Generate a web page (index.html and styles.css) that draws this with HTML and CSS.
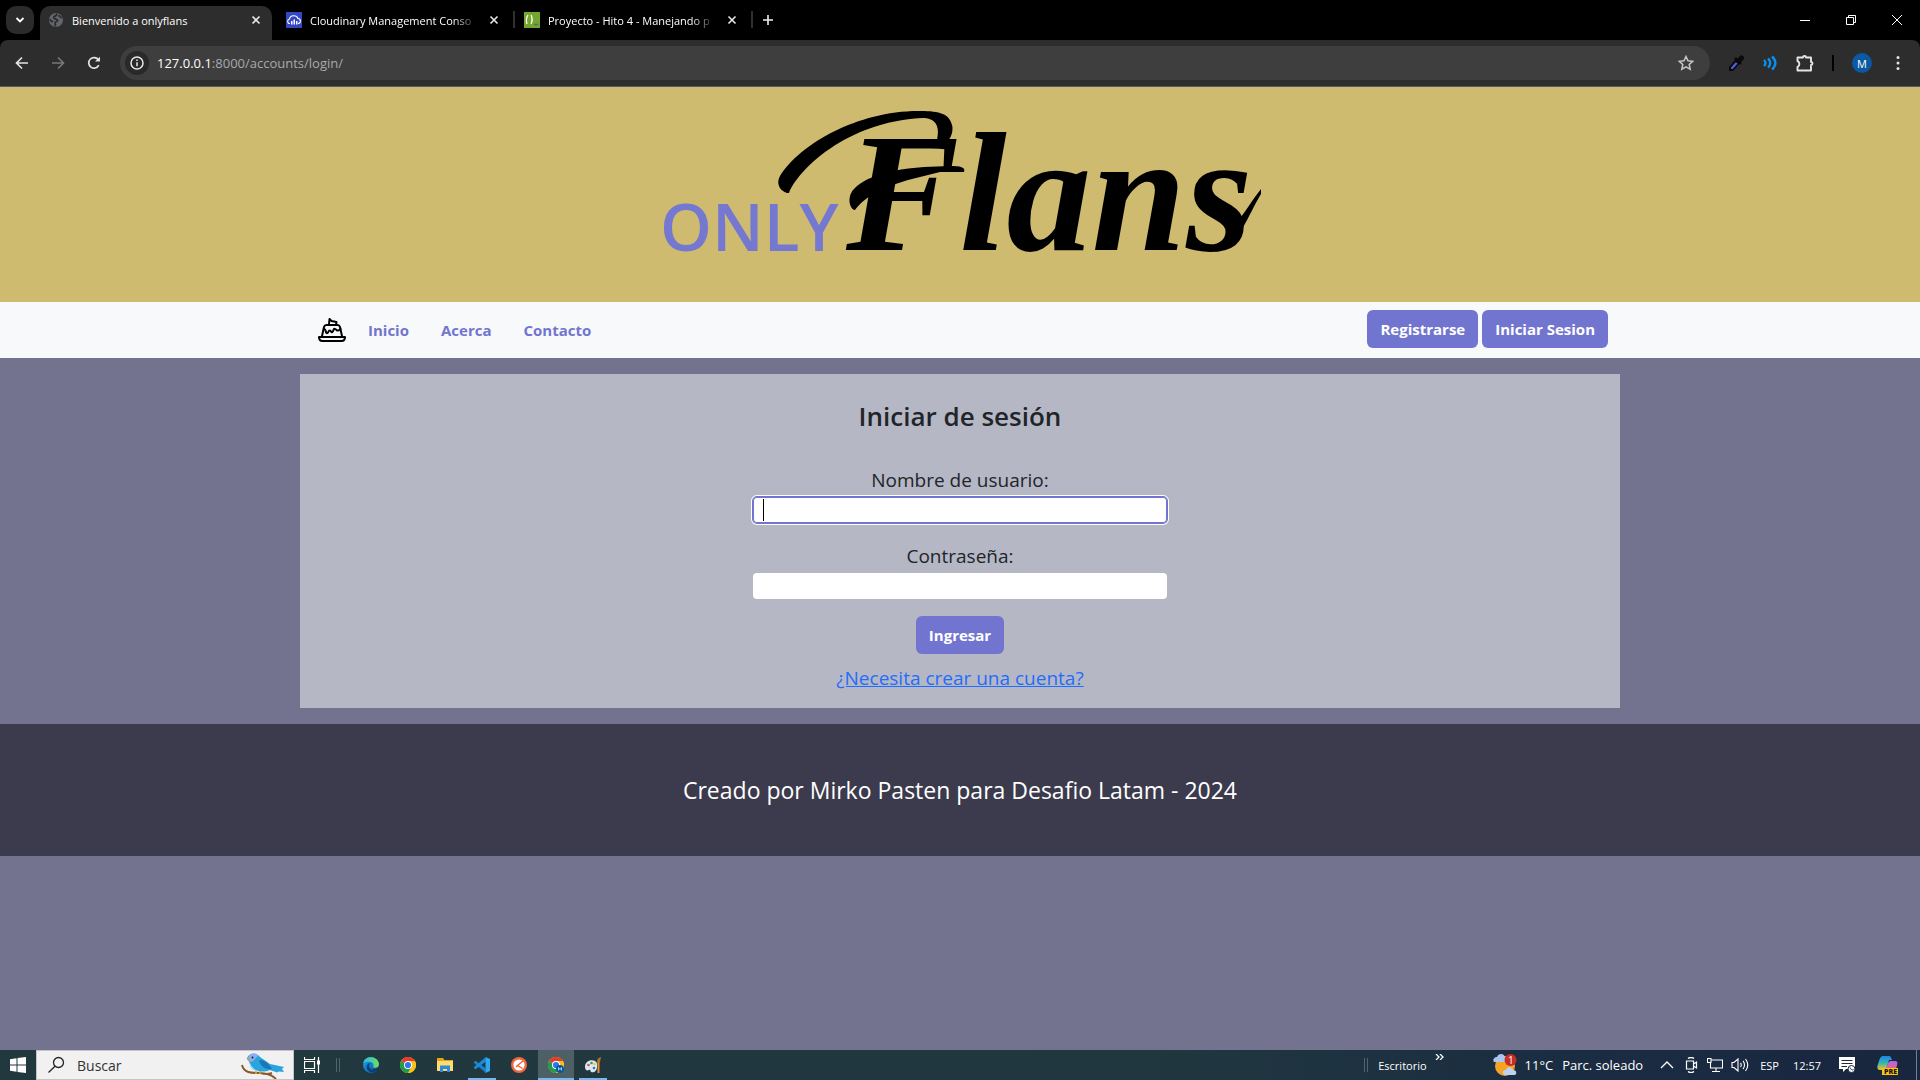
FILE: index.html
```html
<!DOCTYPE html>
<html lang="es">
<head>
<meta charset="utf-8">
<title>Bienvenido a onlyflans</title>
<link rel="stylesheet" href="styles.css">
</head>
<body>
<svg width="0" height="0" class="defs" aria-hidden="true">
  <defs>
    <linearGradient id="edge-a" x1="0" y1="0" x2="1" y2="1"><stop offset="0" stop-color="#1fa5e8"/><stop offset="1" stop-color="#0b50a4"/></linearGradient>
    <linearGradient id="edge-b" x1="0" y1="0" x2="1" y2="0"><stop offset="0" stop-color="#2cb8ea"/><stop offset="1" stop-color="#6fe05a"/></linearGradient>
    <linearGradient id="cop-a" x1="0" y1="0" x2="0" y2="1"><stop offset="0" stop-color="#1d84e8"/><stop offset=".5" stop-color="#35b6b0"/><stop offset="1" stop-color="#f5c026"/></linearGradient>
    <linearGradient id="cop-b" x1="0" y1="0" x2="0" y2="1"><stop offset="0" stop-color="#a66bf0"/><stop offset="1" stop-color="#f0617c"/></linearGradient>
    <symbol id="close" viewBox="0 0 10 10"><path d="M1.500 1.500l7 7M8.500 1.500l-7 7" stroke="#e8e8e8" stroke-width="1.600"/></symbol>
    <symbol id="chrome" viewBox="0 0 16 16">
      <circle cx="8" cy="8" r="8" fill="#fbc116"/>
      <path d="M8 8L1.070 4A8 8 0 0 1 14.930 4z" fill="#e33b2e"/><path d="M1.070 4A8 8 0 0 0 8 16L11.500 10 8 8z" fill="#229b4b"/><path d="M8 4h6.930A8 8 0 0 1 8 16l3.500-6z" fill="#fbc116"/>
      <circle cx="8" cy="8" r="4" fill="#fff"/><circle cx="8" cy="8" r="3.100" fill="#2f77e8"/>
    </symbol>
  </defs>
</svg>

<div class="browser">
  <div class="tabstrip">
    <button class="tab-search" aria-label="Buscar pestañas"><svg width="10" height="8" viewBox="0 0 10 8"><path d="M1.500 2L5 5.500 8.500 2" fill="none" stroke="#fff" stroke-width="1.800"/></svg></button>
    <div class="tab active">
      <svg class="favicon" viewBox="0 0 16 16"><circle cx="8" cy="8" r="7" fill="#62666c"/><path d="M9 1.500c0 2-1 2.500-3 3.200C5 5.500 6.500 7 8.500 7.500c2 .5 1 2-1 2.500-1 .8 0 2 0 4.500M1.500 7.500L5 10M11 3c0 2 2 2 3 3" fill="none" stroke="#2d2d2d" stroke-width="1.800"/></svg>
      <span class="tab-title">Bienvenido a onlyflans</span>
      <button class="tab-close" aria-label="Cerrar"><svg width="10" height="10"><use href="#close"/></svg></button>
    </div>
    <div class="tab">
      <svg class="favicon" viewBox="0 0 16 16"><path fill="#3448c5" d="M0 0h16v16H0z"/><path d="M4 11.500C1 11.500 1 7.500 3.500 7 4 3 10.500 2.500 12 6.500c3.500.5 3 5 0 5" fill="none" stroke="#fff" stroke-width="1.100"/><path d="M5 9h1.500v3.500H5zM7.500 7.500H9v5H7.500zM10 9h1.500v3.500H10z" fill="#fff"/></svg>
      <span class="tab-title">Cloudinary Management Conso</span>
      <button class="tab-close" aria-label="Cerrar"><svg width="10" height="10"><use href="#close"/></svg></button>
    </div>
    <div class="tab next">
      <svg class="favicon" viewBox="0 0 16 16"><path fill="#76a52d" d="M0 0h16v16H0z"/><path d="M4 3C2 6 2 9 3 12M7 3c1.500 3 1.500 6 0 9" fill="none" stroke="#fff" stroke-width="1.300"/><path d="M10 12.500h4" stroke="#3d7a78" stroke-width="1.500"/></svg>
      <span class="tab-title">Proyecto - Hito 4 - Manejando p</span>
      <button class="tab-close" aria-label="Cerrar"><svg width="10" height="10"><use href="#close"/></svg></button>
    </div>
    <button class="new-tab" aria-label="Nueva pestaña"><svg width="12" height="12" viewBox="0 0 12 12"><path d="M6 1v10M1 6h10" stroke="#eee" stroke-width="1.600"/></svg></button>
    <div class="window-buttons">
      <button aria-label="Minimizar"><svg width="12" height="12" viewBox="0 0 12 12"><path d="M1 6.500h10" stroke="#fff"/></svg></button>
      <button aria-label="Restaurar"><svg width="12" height="12" viewBox="0 0 12 12"><path d="M1.500 3.500h7v7h-7zM3.500 3.500v-2h7v7h-2" fill="none" stroke="#fff"/></svg></button>
      <button aria-label="Cerrar ventana"><svg width="12" height="12" viewBox="0 0 12 12"><path d="M1 1l10 10M11 1L1 11" stroke="#fff"/></svg></button>
    </div>
  </div>
  <div class="toolbar">
    <button class="tool" aria-label="Atrás"><svg width="14" height="14" viewBox="0 0 14 14"><path d="M13 7H2M7 1.500L1.500 7 7 12.500" fill="none" stroke="#e3e3e3" stroke-width="1.700"/></svg></button>
    <button class="tool" aria-label="Adelante"><svg width="14" height="14" viewBox="0 0 14 14"><path d="M1 7h11M7 1.500L12.500 7 7 12.500" fill="none" stroke="#777" stroke-width="1.700"/></svg></button>
    <button class="tool" aria-label="Recargar"><svg width="14" height="14" viewBox="0 0 14 14"><path d="M11.800 9.200A5.300 5.300 0 1 1 11.500 4" fill="none" stroke="#e3e3e3" stroke-width="1.700"/><path d="M8 5.500h5V.8z" fill="#e3e3e3"/></svg></button>
    <div class="omnibox">
      <span class="site-info"><svg width="16" height="16" viewBox="0 0 16 16"><circle cx="8" cy="8" r="6" fill="none" stroke="#e8e8e8" stroke-width="1.500"/><path d="M8 7.200v4M8 4.500v1.600" stroke="#e8e8e8" stroke-width="1.500"/></svg></span>
      <span class="url"><b>127.0.0.1</b>:8000/accounts/login/</span>
      <svg width="16" height="16" viewBox="0 0 16 16"><path d="M8 1.500l2 4.300 4.700.5-3.500 3.200 1 4.700L8 11.800l-4.200 2.400 1-4.700L1.300 6.300 6 5.800z" fill="none" stroke="#c7c7c7" stroke-width="1.500"/></svg>
    </div>
    <div class="extensions">
      <svg width="16" height="16" viewBox="0 0 16 16"><path d="M1 16v-4l7-8 4 4-7 8z" fill="#090909"/><path d="M3 14v-1.500l5-5.500 1.700 1.500-5 5.500z" fill="#4f5ce8"/><path d="M7 3l6 6" stroke="#090909" stroke-width="2.500"/><path d="M10.500 6L13.500 3" stroke="#090909" stroke-width="5" stroke-linecap="round"/></svg>
      <svg width="16" height="16" viewBox="0 0 16 16"><path d="M2 5c2 2 2 4 0 6M6 3.500c3 2.500 3 6.500 0 9M10 1.500c4.500 4 4.500 9 0 13" fill="none" stroke="#0b8eee" stroke-width="2.400"/></svg>
      <svg width="18" height="18" viewBox="0 0 18 18"><path d="M1.500 3.500H7a1.500 1.500 0 0 1 3 0h5V8a1.500 1.500 0 0 1 0 3v5.500H1.500V13c2.500-1 2.500-5 0-6z" fill="none" stroke="#e5e5e5" stroke-width="1.900" stroke-linejoin="round"/></svg>
      <span class="divider"></span>
      <span class="avatar">M</span>
      <svg width="16" height="16" viewBox="0 0 16 16" fill="#e3e3e3"><circle cx="8" cy="2.500" r="1.500"/><circle cx="8" cy="8" r="1.500"/><circle cx="8" cy="13.500" r="1.500"/></svg>
    </div>
  </div>
</div>

<main class="page">
  <header class="banner">
    <svg class="logo" viewBox="0 0 640 200" role="img" aria-label="Only Flans">
      <text class="logo-only" x="20" y="161">ONLY</text>
      <text class="logo-flans" x="206" y="160">Flans</text>
      <path d="M149 103C158 80 206 32 282 28C296 28 300 36 297 50L307 52C313 46 313 38 312 35C309 22 296 21 278 21C218 21 160 54 140 86C135 95 142 103 149 103z"/>
      <path d="M215 120C225 106 246 96 272 89L300 82 324 82C326 77 320 76 310 76L284 77C240 80 214 92 210 106C208 114 212 120 215 120z"/>
      <path d="M588 154C602 146 610 122 621 104L621 99C609 114 600 132 588 140z"/>
    </svg>
  </header>
  <nav class="navbar">
    <div class="container nav-row">
      <a class="brand" href="#" aria-label="Onlyflans"><svg width="28" height="24" viewBox="0 0 28 24"><g fill="none" stroke="#000" stroke-width="2" stroke-linejoin="round" stroke-linecap="round"><path d="M1 19h26c0 2.500-1.500 4-3.500 4h-19C2.500 23 1 21.500 1 19z"/><path d="M4 18L6 9c.4-1.400 1.200-2 2.500-2h11c1.300 0 2.100.6 2.500 2l2 9"/><path d="M6 11c1 0 1.500 1 2 3s2 1 2.500-.5 2-1.500 2.500 0 2 .5 2.500-1.500 2-1 3 0 3 0 4-1"/><path d="M11 6l.5-5 2 2 5 1-.5 3"/></g></svg></a>
      <a class="nav-link" href="#">Inicio</a>
      <a class="nav-link" href="#">Acerca</a>
      <a class="nav-link" href="#">Contacto</a>
      <div class="nav-actions">
        <button class="btn">Registrarse</button>
        <button class="btn">Iniciar Sesion</button>
      </div>
    </div>
  </nav>
  <section class="container card">
    <h1>Iniciar de sesión</h1>
    <form class="login">
      <div class="field">
        <label for="user">Nombre de usuario:</label>
        <div class="input-wrap"><input class="focused" id="user" type="text"><span class="caret"></span></div>
      </div>
      <div class="field">
        <label for="pass">Contraseña:</label>
        <input id="pass" type="password">
      </div>
      <button class="btn" type="button">Ingresar</button>
      <a class="signup" href="#">¿Necesita crear una cuenta?</a>
    </form>
  </section>
  <footer class="footer">Creado por Mirko Pasten para Desafio Latam - 2024</footer>
</main>

<div class="taskbar">
  <button class="task" aria-label="Inicio"><svg width="16" height="16" viewBox="0 0 16 16"><path d="M0 2.200L6.500 1.300v6.200H0zM7.500 1.100L16 0v7.500H7.500zM0 8.500h6.500v6.200L0 13.800zM7.500 8.500H16V16l-8.500-1.100z" fill="#fff"/></svg></button>
  <label class="search">
    <svg width="18" height="18" viewBox="0 0 18 18"><circle cx="11.500" cy="6.500" r="5" fill="none" stroke="#222" stroke-width="1.300"/><path d="M8 10.200L1.500 16.500" stroke="#222" stroke-width="1.300"/></svg>
    <input type="text" value="Buscar" aria-label="Buscar">
    <svg width="44" height="28" viewBox="0 0 44 28"><path d="M1 14c2 8 9 8 17 8 7 0 12 1 17 6M19 22c7 2 9 1 12 0" fill="none" stroke="#8a5a2c" stroke-width="2"/><path d="M6 8C7 2 15 1 19 6l10 7 14 3-2 2 2 3-5-.5-2 1-7-2.500c-6 2.500-13 2-17-2C8 13 9 11 6 8z" fill="#2ba3dd"/><path d="M18 9c7 0 11 5 13 9-5 1-11-1-13-9z" fill="#1878b8"/><path d="M7 7C9 1 15 1 18 5c-4 0-4 6-9 6z" fill="#8eaef0"/><path d="M9 12c1 5 4 7 9 8-6 0-10-3-9-8z" fill="#8fe0ee"/><path d="M5.500 8l4-1-1.500 2.500z" fill="#d89a35"/><circle cx="11.500" cy="6.500" r="1" fill="#222"/><path d="M15 20v3M19 20v3" stroke="#d8a638" stroke-width="1.500"/></svg>
  </label>
  <button class="task" aria-label="Vista de tareas"><svg width="16" height="16" viewBox="0 0 16 16"><path d="M.5 0v2.500h10V0M.5 16v-2.500h10V16M.5 4.500h10v7H.5zM14.500 0v16" fill="none" stroke="#fff" stroke-width="1.200"/><path d="M13 3.500h3v4h-3z" fill="#fff"/></svg></button>
  <span class="grip"></span>
  <div class="apps">
    <button class="task" aria-label="Edge"><svg width="16" height="16" viewBox="0 0 16 16"><circle cx="8" cy="8" r="8" fill="url(#edge-a)"/><path d="M.3 6C1.500-1.500 14.500-2 16 7c0 4-5 4.500-6 3 2-4-2-7-9.700-4z" fill="url(#edge-b)"/><path d="M7.500 6.500C4 9 7 14 13.500 13.500 9 18 2 13 4 8.500c.5-1.500 2-2.500 3.500-2z" fill="#0b3f78"/><path d="M9.500 11c2 1.500 4.500 1 6-.8L16 12l-2 1.500c-2 .5-4-.7-4.500-2.500z" fill="#1e343e"/></svg></button>
    <button class="task" aria-label="Chrome"><svg width="16" height="16"><use href="#chrome"/></svg></button>
    <button class="task" aria-label="Explorador"><svg width="16" height="16" viewBox="0 0 16 16"><path d="M0 1h6l1.500 2H16v11H0z" fill="#e5a517"/><path d="M0 4h16v10H0z" fill="#ffdb72"/><path d="M3 15V8.500h10V15h-3v-3H6v3z" fill="#2b8ddc"/></svg></button>
    <button class="task open" aria-label="Visual Studio Code"><svg width="16" height="16" viewBox="0 0 16 16"><path d="M11.500 0L16 2v12l-4.500 2z" fill="#2fa8f0"/><path d="M0 5l1.500-1.300L12 11.500V16L0 6z" fill="#1d80c8"/><path d="M0 11l1.500 1.300L12 4.500V0L0 10z" fill="#1b8ad8"/></svg></button>
    <button class="task" aria-label="Postman"><svg width="16" height="16" viewBox="0 0 16 16"><circle cx="8" cy="8" r="8" fill="#f2663c"/><circle cx="8" cy="8" r="5.600" fill="#fff"/><path d="M12 4L6.500 8.500l5 3M7 8.500L5 10" fill="none" stroke="#f05a32" stroke-width="1.200"/></svg></button>
    <button class="task open current" aria-label="Chrome, ventana actual"><svg width="16" height="16" viewBox="0 0 16 16"><use href="#chrome"/><circle cx="12" cy="12" r="4" fill="#07579f"/><path d="M10.500 13.500v-3l1.500 2 1.500-2v3" fill="none" stroke="#cde" stroke-width=".8"/></svg></button>
    <button class="task open" aria-label="Paint"><svg width="16" height="16" viewBox="0 0 16 16"><path d="M0 10C0 4 6 2 10 4c3 2 2 4 2 6 0 4-3 6-6 5-1-1 0-3-2-2-2 1-4 0-4-3z" fill="#dbe9f3"/><circle cx="3.500" cy="8" r="1.300" fill="#e04d3d"/><circle cx="6.500" cy="6" r="1.300" fill="#3a9b4b"/><circle cx="9.500" cy="7" r="1.200" fill="#f1bd33"/><circle cx="9" cy="11" r="1.300" fill="#2c7bd0"/><path d="M13.500 5v11" stroke="#e58a2d" stroke-width="2"/><path d="M12 5c0-3 1-4 4-5l-1 5z" fill="#b1722b"/></svg></button>
  </div>
  <div class="tray">
    <span class="grip"></span>
    <span class="desk">Escritorio</span>
    <svg class="more" width="9" height="6" viewBox="0 0 9 6"><path d="M1 0l3 3-3 3M5 0l3 3-3 3" fill="none" stroke="#fff" stroke-width="1.300"/></svg>
    <svg width="26" height="24" viewBox="0 0 26 24"><circle cx="13" cy="13" r="10" fill="#f5a326"/><path d="M2 9c-2-3 1-5 3-5 1-4 7-4 8 0 3 1 2 5 0 5z" fill="#abc5f2"/><path d="M12 22c-3-3 0-5 2-5 1-4 6-3 7 0 4 0 4 4 2 5z" fill="#bdd1f5"/><circle cx="18.500" cy="7" r="6" fill="#c72c25"/><text x="16" y="11" font-size="10" fill="#fff">1</text></svg>
    <span class="weather"><span>11°C</span><span>Parc. soleado</span></span>
    <div class="tray-icons">
      <svg width="16" height="16" viewBox="0 0 16 16"><path d="M2 11l6-6 6 6" fill="none" stroke="#fff" stroke-width="1.300"/></svg>
      <svg width="16" height="16" viewBox="0 0 16 16"><path d="M5 1.500C6.500.2 9.500.2 11 1.500M5 14.500c1.500 1.300 4.500 1.300 6 0M3.500 4h7v8h-7zM10.500 7l3-2v6l-3-2" fill="none" stroke="#fff" stroke-width="1.200"/></svg>
      <svg width="16" height="16" viewBox="0 0 16 16"><path d="M4 3h11.500v8H3.500V6M9 11v3M5 14.500h8M.5 1.500H4v4H.5z" fill="none" stroke="#fff" stroke-width="1.100"/></svg>
      <svg width="18" height="16" viewBox="0 0 18 16"><path d="M1 5.500h2L7 2v12L3 10.500H1zM9.500 6c1 1 1 3 0 4M12 4c2 2 2 6 0 8M14.500 2c3 4 3 8 0 12" fill="none" stroke="#fff" stroke-width="1.100"/></svg>
    </div>
    <span class="lang">ESP</span>
    <span class="clock">12:57</span>
    <svg width="16" height="16" viewBox="0 0 16 16"><path d="M0 0h16v12H7l-3 3v-3H0z" fill="#fff"/><path d="M2.500 3.500h11M2.500 6.500h11M2.500 9.500H8" stroke="#1a2b42"/><circle cx="12.500" cy="12" r="3.500" fill="#fff" stroke="#1a2b42"/><path d="M11 10.500c.5 2 2 3 3.500 2" fill="none" stroke="#1a2b42"/></svg>
    <svg class="copilot" width="22" height="20" viewBox="0 0 22 20"><path d="M5 1h7c2 0 2 2 3 4h-3L9 15H3C0 15 0 12 1 9l2-6z" fill="url(#cop-a)"/><path d="M13 6h5c4 0 2 4 1 8H9l2-6z" fill="url(#cop-b)"/><path d="M5 13h16v7H5z" fill="#ffc20e"/><text x="7" y="19" font-size="7" font-weight="800" fill="#171717">PRE</text></svg>
    <span class="peek"></span>
  </div>
</div>
</body>
</html>
```
FILE: styles.css
```css
* { box-sizing: border-box; }
body {
  margin: 0;
  min-height: 100vh;
  display: flex;
  flex-direction: column;
  background: #73738f;
  color: #212529;
  font-family: "Open Sans", "Noto Sans", sans-serif;
}
.defs { position: absolute; }
svg { display: block; flex: none; }
button { font: inherit; border: 0; padding: 0; background: none; display: flex; align-items: center; justify-content: center; }

/* Browser frame */
.browser { background: #000; color: #fff; border-bottom: 1px solid #5b5b5b; }
.tabstrip { display: flex; height: 40px; font-size: 12px; align-items: center; }
.tab-search { width: 28px; height: 28px; border-radius: 10px; background: #2b2b2b; margin: 0 6px; }
.tab { display: flex; align-items: center; width: 243px; height: 34px; padding: 0 3px 0 14px; border-right: 2px solid #2f2f2f; border-image: linear-gradient(#000 9px, #303030 9px, #303030 25px, #000 25px) 1; align-self: flex-start; margin-top: 3px; }
.tab.next { width: 238px; padding-left: 9px; }
.tab.active { width: 232px; border: 0; border-radius: 10px 10px 0 0; background: #2d2d2d; align-self: flex-end; padding: 0 0 6px 8px; }
.favicon { width: 16px; height: 16px; margin-right: 8px; }
.tab-title { flex: 1; overflow: hidden; white-space: nowrap; font-size: 11px; mask-image: linear-gradient(90deg, #000 85%, transparent); }
.tab.active .tab-title { mask-image: none; }
.tab-close { width: 32px; height: 24px; }
.new-tab { width: 30px; height: 28px; }
.window-buttons { margin-left: auto; display: flex; }
.window-buttons button { width: 46px; height: 40px; }
.toolbar { display: flex; align-items: center; height: 46px; padding: 0 14px 0 4px; background: #2d2d2d; border-radius: 8px 8px 0 0; }
.tool { width: 36px; height: 34px; }
.omnibox { flex: 1; margin-left: 8px; height: 34px; border-radius: 17px; background: #3e3e3e; display: flex; align-items: center; padding: 0 16px 0 5px; font-size: 13px; color: #a9a9a9; }
.site-info { width: 24px; height: 24px; border-radius: 12px; background: #292929; display: grid; place-items: center; margin-right: 8px; }
.url { flex: 1; }
.url b { font-weight: 400; color: #fff; }
.extensions { display: flex; align-items: center; gap: 18px; padding-left: 18px; }
.divider { width: 2px; height: 16px; background: #000; }
.avatar { width: 20px; height: 20px; border-radius: 10px; background: #0a59a2; color: #fff; font-size: 11px; display: grid; place-items: center; }

/* Site */
.page { flex: 1; }
.container { width: 100%; max-width: 1320px; margin: 0 auto; }
.banner { display: flex; justify-content: center; padding: 3px 0 12px; background: #cfbb70; }
.logo { width: 640px; height: 200px; }
.logo-only { font: 600 66px "Open Sans", sans-serif; fill: #7478d0; }
.logo-flans { font: italic 700 170px "Liberation Serif", serif; }
.navbar { background: #f8f9fb; }
.nav-row { display: flex; align-items: center; height: 56px; padding: 0 12px 0 18px; }
.brand { margin-right: 6px; }
.nav-link { color: #7175d0; font-size: 15px; font-weight: 700; text-decoration: none; padding: 0 16px; }
.nav-actions { margin: 0 0 2px auto; display: flex; gap: 4px; }
.btn { height: 38px; padding: 0 13px; border-radius: 6px; background: #7175d0; color: #fff; font-size: 15px; font-weight: 700; }
.card { margin-top: 16px; margin-bottom: 16px; padding: 24px 0 16px; background: #b6b7c5; display: flex; flex-direction: column; align-items: center; }
.card h1 { margin: 0 0 32px; font-size: 26px; line-height: 36px; font-weight: 600; }
.login { display: flex; flex-direction: column; align-items: center; font-size: 19px; line-height: 28px; font-weight: 400; }
.field { width: 414px; margin-bottom: 17px; text-align: center; }
.field + .field { padding-top: 2px; }
.field label { display: block; margin-bottom: 3px; }
.field input { display: block; width: 100%; height: 26px; border: 0; border-radius: 4px; padding: 0 10px; font: inherit; background: #fff; outline: 0; }
.field .focused { box-shadow: inset 0 0 0 1px #7175d0, 0 0 0 1px #7175d0, 0 0 0 2px #fff; }
.input-wrap { position: relative; }
.caret { position: absolute; left: 10px; top: 2px; width: 1px; height: 22px; background: #000; }
.signup { margin-top: 10px; color: #1f6dfb; }
.footer { background: #3c3b4d; color: #fff; text-align: center; font-size: 23px; line-height: 36px; padding: 48px 0; }

/* Windows taskbar */
.taskbar { display: flex; align-items: center; height: 30px; background: linear-gradient(90deg, #22383f, #20373f 60%, #1a2b42 85%, #18263e); color: #fff; font-size: 12px; }
.task { width: 36px; height: 30px; }
.search { width: 258px; height: 30px; border: 1px solid #c4c4c4; background: #f1f1f1; display: flex; align-items: center; padding: 0 8px 0 10px; gap: 12px; }
.search input { flex: 1; min-width: 0; border: 0; padding: 0; background: transparent; color: #333; font: 14px "Open Sans", sans-serif; }
.grip { width: 4px; height: 14px; border: solid #50646c; border-width: 0 1px; }
.task + .grip { margin: 0 13px 0 6px; }
.apps { display: flex; gap: 1px; }
.open { box-shadow: inset 0 -2px #76b9ed; }
.apps .open:not(.current) { background: linear-gradient(#76b9ed, #76b9ed) center bottom / 28px 2px no-repeat; box-shadow: none; }
.current { background: #4c6066; }
.tray { margin-left: auto; display: flex; align-items: center; }
.desk { margin: 0 8px 0 10px; font-size: 11px; }
.more { align-self: flex-start; margin: 4px 48px 0 0; }
.weather { display: flex; gap: 9px; margin: 0 16px 0 7px; font-size: 13px; }
.tray-icons { display: flex; gap: 8px; }
.lang { margin: 0 14px 0 11px; font-size: 11px; }
.clock { margin-right: 18px; font-size: 11px; }
.copilot { margin: 0 17px 0 22px; }
.peek { width: 4px; height: 30px; border-left: 1px solid #71808f; }
```
